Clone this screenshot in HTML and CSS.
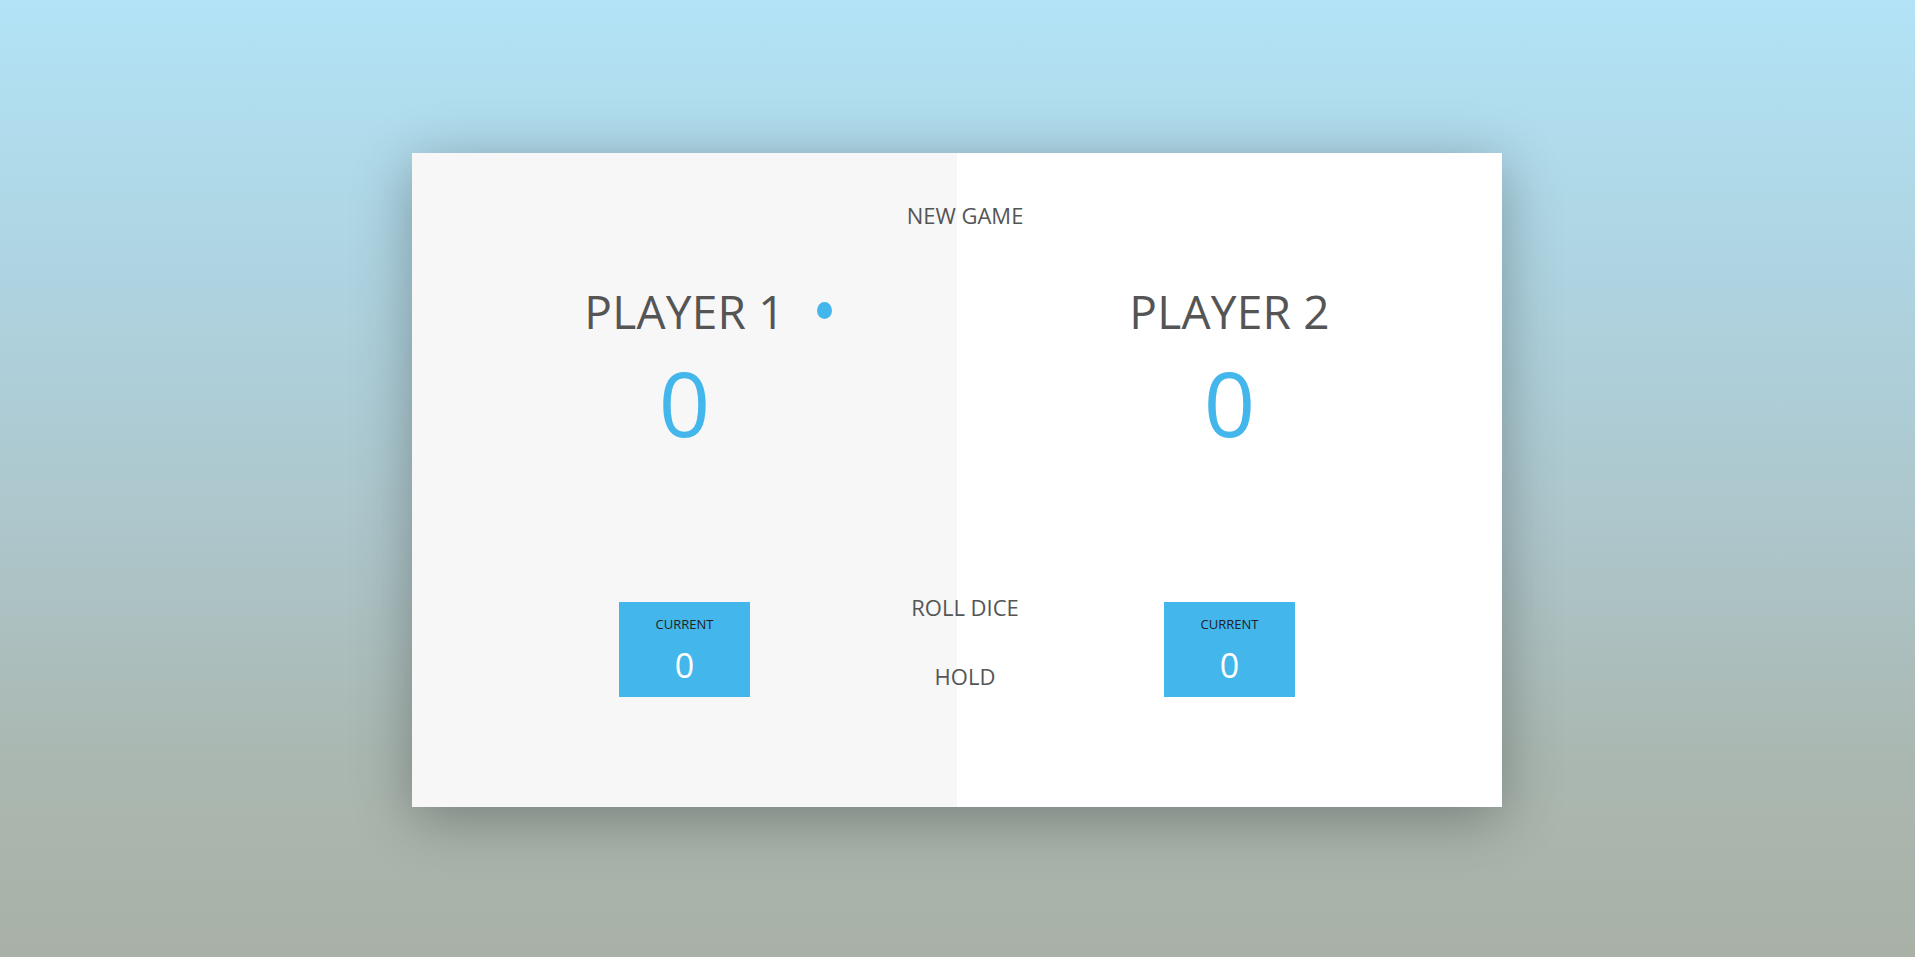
FILE: index.html
```html
<!DOCTYPE html>
<html lang="en">
<head>
<meta charset="utf-8">
<title>Pig Game</title>
<link rel="stylesheet" href="styles.css">
</head>
<body>
<div class="wrapper">
  <section class="panel active">
    <div class="player-name">Player 1<span class="dot"></span></div>
    <div class="player-score">0</div>
    <div class="current-box">
      <div class="current-label">Current</div>
      <div class="current-score">0</div>
    </div>
  </section>
  <section class="panel">
    <div class="player-name">Player 2</div>
    <div class="player-score">0</div>
    <div class="current-box">
      <div class="current-label">Current</div>
      <div class="current-score">0</div>
    </div>
  </section>
  <button class="btn btn-new"><i class="btn-icon"></i>New game</button>
  <button class="btn btn-roll"><i class="btn-icon"></i>Roll dice</button>
  <button class="btn btn-hold"><i class="btn-icon"></i>Hold</button>
</div>
</body>
</html>
```
FILE: styles.css
```css
* { box-sizing: border-box; margin: 0; padding: 0; }

html, body { height: 100%; }

body {
  font-family: "Open Sans", "Liberation Sans", sans-serif;
  color: #555;
  background: linear-gradient(to bottom, #b2e3f6 0%, #aed3e0 30%, #adc6cb 55%, #aab7b0 80%, #a9b1a7 100%);
  display: flex;
  align-items: center;
  justify-content: center;
  padding-right: 1px;
  overflow: hidden;
}

.wrapper {
  position: relative;
  width: 1090px;
  height: 654px;
  margin-top: 3px;
  display: flex;
  background: #fff;
  box-shadow: 0 11px 55px rgba(0, 0, 0, 0.3);
}

.panel {
  width: 50%;
  height: 100%;
  padding: 109px 109px 0;
  background: #fff;
}

.panel.active { background: #f7f7f7; }

.player-name {
  position: relative;
  margin-top: 26px;
  font-size: 46px;
  line-height: 46px;
  height: 46px;
  font-weight: 400;
  letter-spacing: 0.2px;
  text-transform: uppercase;
  text-align: center;
  color: #555;
}

.dot {
  position: absolute;
  top: 14px;
  right: 16px;
  width: 15px;
  height: 17px;
  border-radius: 50%;
  background: #43b6eb;
}

.player-score {
  margin-top: 24px;
  font-size: 90px;
  line-height: 88px;
  height: 88px;
  font-weight: 400;
  text-align: center;
  color: #43b6eb;
}

.current-box {
  width: 131px;
  margin: 156px auto 0;
  padding: 14px 13px 15px;
  background: #43b6eb;
  text-align: center;
  color: #fff;
}

.current-label {
  font-size: 13px;
  line-height: 16px;
  text-transform: uppercase;
  color: #222;
}

.current-score {
  margin-top: 16px;
  font-size: 34px;
  line-height: 34px;
}

.btn {
  position: absolute;
  left: 50%;
  width: 218px;
  transform: translateX(-50%);
  background: none;
  border: none;
  font-family: "Open Sans", "Liberation Sans", sans-serif;
  font-size: 22px;
  line-height: 30px;
  text-transform: uppercase;
  color: #555;
  cursor: pointer;
}

.btn-icon {
  display: inline-block;
  width: 0;
  margin-right: 16px;
}

.btn-new { top: 47px; }
.btn-roll { top: 439px; }
.btn-hold { top: 508px; }
```
